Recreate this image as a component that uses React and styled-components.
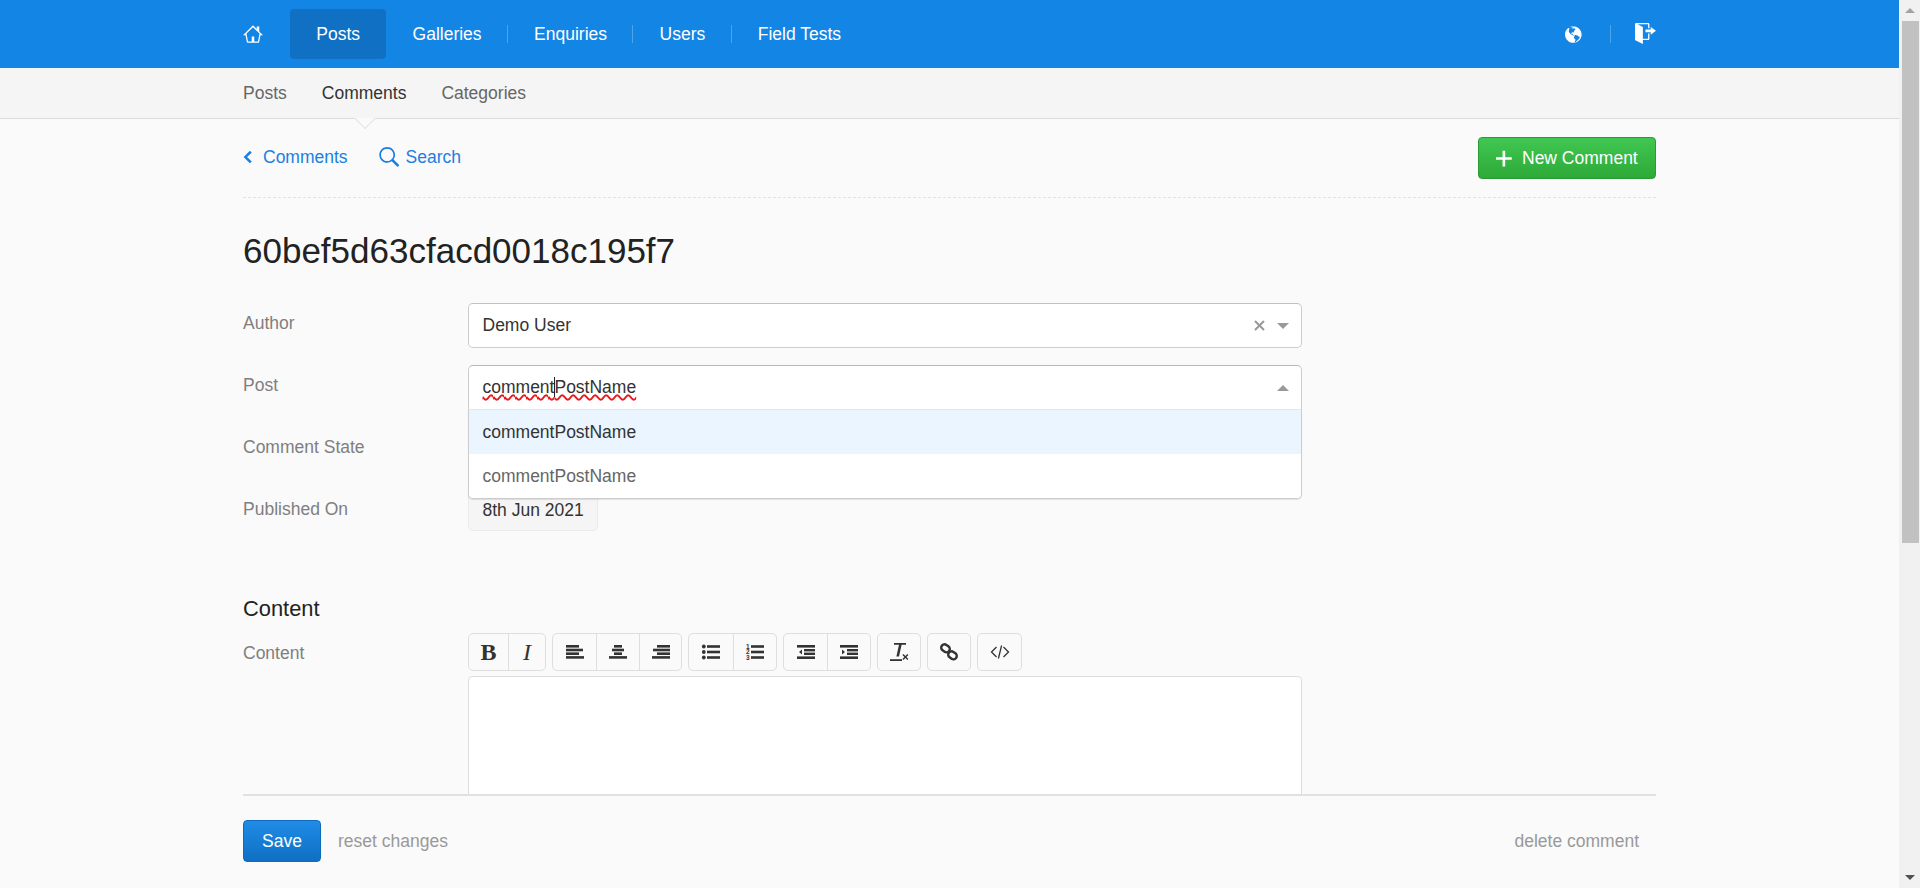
import React from "react";
import styled, { createGlobalStyle } from "styled-components";

const GlobalStyle = createGlobalStyle`
  html, body {
    margin: 0;
    padding: 0;
    height: 100%;
    overflow: hidden;
    background: #fafafa;
  }
  body {
    font-family: "Liberation Sans", Arial, sans-serif;
    font-size: 17.5px;
    color: #1a1a1a;
  }
  * { box-sizing: border-box; }
`;

function Icon({ d, vw = 16, vh = 16, size = 20, color = "currentColor" }) {
  return (
    <svg width={(size * vw) / vh} height={size} viewBox={`0 0 ${vw} ${vh}`} fill={color}>
      <path d={d} />
    </svg>
  );
}

const homePath =
  "M16 9l-3-3V2h-2v2L8 1 0 9h2l1 5c0 .55.45 1 1 1h8c.55 0 1-.45 1-1l1-5h2zm-4 5H9v-4H7v4H4L2.81 7.69 8 2.5l5.19 5.19L12 14z";
const globePath =
  "M7 1C3.14 1 0 4.14 0 8s3.14 7 7 7c.48 0 .94-.05 1.38-.14-.17-.08-.2-.73-.02-1.09.19-.41.81-1.45.2-1.8-.61-.35-.44-.5-.81-.91-.37-.41-.22-.47-.25-.58-.08-.34.36-.89.39-.94.02-.06.02-.27 0-.33 0-.08-.27-.22-.34-.23-.06 0-.11.11-.2.13-.09.02-.5-.25-.59-.33-.09-.08-.14-.23-.27-.34-.13-.13-.14-.03-.33-.11s-.8-.31-1.28-.48c-.48-.19-.52-.47-.52-.66-.02-.2-.3-.47-.42-.67-.14-.2-.16-.47-.2-.41-.04.06.25.78.2.81-.05.02-.16-.2-.3-.38-.14-.19.14-.09-.3-.95s.14-1.3.17-1.75c.03-.45.38.17.19-.13-.19-.3 0-.89-.14-1.11-.13-.22-.88.25-.88.25.02-.22.69-.58 1.16-.92.47-.34.78-.06 1.16.05.39.13.41.09.28-.05-.13-.13.06-.17.36-.13.28.05.38.41.83.36.47-.03.05.09.11.22s-.06.11-.38.3c-.3.2.02.22.55.61s.38-.25.31-.55c-.07-.3.39-.06.39-.06.33.22.27.02.5.08.23.06.91.64.91.64-.83.44-.31.48-.17.59.14.11-.28.3-.28.3-.17-.17-.19.02-.3.08-.11.06-.02.22-.02.22-.56.09-.44.69-.42.83 0 .14-.38.36-.47.58-.09.2.25.64.06.66-.19.03-.34-.66-1.31-.41-.3.08-.94.41-.59 1.08.36.69.92-.19 1.11-.09.19.1-.06.53-.02.55.04.02.53.02.56.61.03.59.77.53.92.55.17 0 .7-.44.77-.45.06-.03.38-.28 1.03.09.66.36.98.31 1.2.47.22.16.08.47.28.58.2.11 1.06-.03 1.28.31.22.34-.88 2.09-1.22 2.28-.34.19-.48.64-.84.92s-.81.64-1.27.91c-.41.23-.47.66-.66.8 3.14-.7 5.48-3.5 5.48-6.84 0-3.86-3.14-7-7-7z";
const signOutPath =
  "M11.992 8.994V6.996H7.995v-2h3.997V2.999l3.998 2.998-3.998 2.998zm-1.998 2.998H5.996V2.998L2 1h7.995v2.998h1V1c0-.55-.45-.999-1-.999H.999A1.001 1.001 0 0 0 0 1v11.372c0 .39.22.73.55.91L5.996 16v-3.008h3.998c.55 0 1-.45 1-1V7.995h-1v3.997z";
const searchPath =
  "M15.7 13.3l-3.81-3.83A5.93 5.93 0 0 0 13 6c0-3.31-2.69-6-6-6S1 2.69 1 6s2.69 6 6 6c1.3 0 2.48-.41 3.47-1.11l3.83 3.81c.19.2.45.3.7.3.25 0 .52-.09.7-.3a.996.996 0 0 0 0-1.41v.01zM7 10.7c-2.59 0-4.7-2.11-4.7-4.7 0-2.59 2.11-4.7 4.7-4.7 2.59 0 4.7 2.11 4.7 4.7 0 2.59-2.11 4.7-4.7 4.7z";
const chevronPath = "M5.5 3L7 4.5 3.25 8 7 11.5 5.5 13l-5-5 5-5z";
const plusPath = "M12 9H7v5H5V9H0V7h5V2h2v5h5v2z";

const Page = styled.div`
  display: flex;
  width: 1920px;
  height: 888px;
  overflow: hidden;
`;
const Main = styled.div`
  flex: 1;
  min-width: 0;
  display: flex;
  flex-direction: column;
  background: #fafafa;
`;
const BarInner = styled.div`
  width: 1413px;
  height: 100%;
  margin: 0 auto;
  display: flex;
  align-items: ${(p) => p.$align || "stretch"};
`;
const Content = styled.div`
  width: 1413px;
  margin: 0 auto;
`;

const TopBar = styled.header`
  flex: none;
  height: 68px;
  background: #1385e5;
  color: #fff;
`;
const NavItem = styled.a`
  height: 50px;
  display: flex;
  align-items: center;
  position: relative;
  padding: 0 26.25px;
  border-radius: 4px;
  background: ${(p) => (p.$active ? "#1071c4" : "transparent")};
  ${(p) =>
    p.$sep &&
    `&::after {
      content: "";
      position: absolute;
      right: 0;
      top: 16px;
      height: 18px;
      width: 1px;
      background: rgba(255, 255, 255, 0.25);
    }`}
`;
const HomeLink = styled.a`
  display: flex;
  align-items: center;
  width: 47px;
  height: 50px;
`;
const NavRight = styled.div`
  margin-left: auto;
  display: flex;
  align-items: center;
`;
const GlobeLink = styled.a`
  display: flex;
  align-items: center;
  height: 18px;
  padding: 0 28px 0 0;
  border-right: 1px solid rgba(255, 255, 255, 0.25);
`;
const SignOutLink = styled.a`
  display: flex;
  margin: -1px 0 0 24px;
`;

const SubBar = styled.nav`
  flex: none;
  height: 51px;
  background: #f5f5f5;
  border-bottom: 1px solid #dcdcdc;
`;
const SubItem = styled.a`
  position: relative;
  display: flex;
  align-items: center;
  height: 50px;
  margin-right: 35px;
  color: ${(p) => (p.$active ? "#333" : "#666")};
  ${(p) =>
    p.$active &&
    `&::after {
      content: "";
      position: absolute;
      left: 50%;
      bottom: -7.5px;
      width: 15px;
      height: 15px;
      margin-left: -7.5px;
      background: #fafafa;
      border-right: 1px solid #dcdcdc;
      border-bottom: 1px solid #dcdcdc;
      clip-path: polygon(100% 0, 100% 100%, 0 100%);
      transform: rotate(45deg);
    }`}
`;

const Body = styled.div`
  flex: 1;
  min-height: 0;
  overflow: hidden;
`;
const ActionRow = styled.div`
  height: 79px;
  display: flex;
  align-items: center;
  padding-bottom: 2px;
  border-bottom: 1px dashed #e1e1e1;
`;
const TextLink = styled.a`
  display: flex;
  align-items: center;
  color: #1a7fe3;
  margin-right: ${(p) => p.$mr || 0}px;
`;
const LinkIcon = styled.span`
  display: flex;
  margin-right: ${(p) => p.$mr}px;
`;
const NewButton = styled.button`
  margin: 2px 0 0 auto;
  width: 178px;
  height: 42px;
  display: flex;
  align-items: center;
  justify-content: center;
  gap: 10px;
  padding: 0;
  color: #fff;
  font: inherit;
  border: 1px solid #2a9a34;
  border-radius: 4px;
  background: linear-gradient(to bottom, #40c752, #2ea938);
`;
const Title = styled.h1`
  margin: 0;
  padding-top: 33px;
  height: 105px;
  font-size: 35px;
  line-height: 40px;
  font-weight: 400;
  color: #222;
`;

const Row = styled.div`
  display: flex;
  margin-bottom: 17px;
`;
const Label = styled.label`
  flex: none;
  width: 225px;
  line-height: 41px;
  color: #7f7f7f;
`;
const Field = styled.div`
  position: relative;
  width: 834px;
`;
const Control = styled.div`
  height: 45px;
  display: flex;
  align-items: center;
  padding: 0 12px 0 13.5px;
  background: #fff;
  border: 1px solid #ccc;
  border-top-color: ${(p) => (p.$open ? "#b8b8b8" : "#c2c2c2")};
  border-radius: ${(p) => (p.$open ? "5px 5px 0 0" : "5px")};
  color: #333;
`;
const SpellText = styled.span`
  text-decoration: underline wavy #e8181b 1.5px;
  text-underline-offset: 1px;
`;
const Caret = styled.span`
  display: inline-block;
  width: 1px;
  height: 20px;
  margin-right: -1px;
  vertical-align: -4px;
  background: #222;
`;
const ClearX = styled.svg`
  margin-left: auto;
  width: 11px;
  height: 11px;
  stroke: #999;
  stroke-width: 2;
`;
const Arrow = styled.span`
  width: 0;
  height: 0;
  margin-left: ${(p) => (p.$only ? "auto" : "12px")};
  border-left: 6.5px solid transparent;
  border-right: 6.5px solid transparent;
  ${(p) => (p.$up ? "border-bottom" : "border-top")}: 6px solid #999;
`;
const Menu = styled.div`
  position: absolute;
  z-index: 2;
  left: 0;
  right: 0;
  top: 44px;
  background: #fff;
  border: 1px solid #ccc;
  border-top-color: #e6e6e6;
  border-radius: 0 0 5px 5px;
  box-shadow: 0 1px 1px rgba(0, 0, 0, 0.1);
  overflow: hidden;
`;
const Option = styled.div`
  height: 44px;
  display: flex;
  align-items: center;
  padding: 0 13.5px;
  background: ${(p) => (p.$focused ? "#ebf5ff" : "#fff")};
  color: ${(p) => (p.$focused ? "#333" : "#666")};
`;
const ReadOnly = styled.div`
  display: inline-flex;
  align-items: center;
  height: 42px;
  padding: 0 13.5px;
  background: #f5f5f5;
  border: 1px solid #ebebeb;
  border-radius: 5px;
  color: #333;
`;
const SectionTitle = styled.h2`
  margin: 0;
  padding-top: 48px;
  height: 85px;
  font-size: 21.875px;
  line-height: 26px;
  font-weight: 400;
  color: #222;
`;
const ToolBar = styled.div`
  display: flex;
  gap: 6px;
  height: 38px;
  margin-bottom: 5px;
`;
const ToolGroup = styled.div`
  display: flex;
  border: 1px solid #dedede;
  border-radius: 5px;
`;
const ToolButton = styled.button`
  width: ${(p) => p.$w}px;
  padding: 0;
  display: flex;
  align-items: center;
  justify-content: center;
  background: none;
  border: 0;
  color: #333;
  font-family: "Liberation Serif", "Times New Roman", serif;
  font-size: 24px;
  & + & {
    border-left: 1px solid #dedede;
  }
`;
const Editor = styled.div`
  height: 300px;
  background: #fff;
  border: 1px solid #dedede;
  border-radius: 4px 4px 0 0;
`;

const Footer = styled.footer`
  flex: none;
  width: 1413px;
  height: 94px;
  margin: 0 auto;
  display: flex;
  align-items: center;
  padding-bottom: 2px;
  border-top: 2px solid #e1e1e1;
  background: #fafafa;
`;
const SaveButton = styled.button`
  width: 78px;
  height: 42px;
  padding: 0;
  color: #fff;
  font: inherit;
  border: 1px solid #0f6cbd;
  border-radius: 4px;
  background: linear-gradient(to bottom, #1f8ce6, #0f6fc3);
`;
const MutedLink = styled.a`
  color: #999;
  margin-left: ${(p) => p.$ml || "0"};
  margin-right: ${(p) => p.$mr || "0"};
`;

const ScrollBar = styled.div`
  flex: none;
  width: 21px;
  display: flex;
  flex-direction: column;
  align-items: center;
  background: #f1f1f1;
`;
const ScrollCap = styled.div`
  height: 21px;
  flex: none;
  display: flex;
  align-items: center;
  justify-content: center;
  width: 100%;
`;
const ScrollArrow = styled.span`
  width: 0;
  height: 0;
  border-left: 5px solid transparent;
  border-right: 5px solid transparent;
  ${(p) => (p.$down ? "border-top: 5px solid #505050" : "border-bottom: 5px solid #a3a3a3")};
`;
const ScrollThumb = styled.div`
  width: 17px;
  height: 522px;
  margin-left: 1px;
  background: #c1c1c1;
`;
const ScrollSpace = styled.div`
  flex: 1;
`;

const Glyph = styled.svg`
  width: 20px;
  height: 20px;
  fill: #333;
`;
const ListNumber = styled.text`
  font-family: "Liberation Sans", Arial, sans-serif;
  font-size: 6.5px;
  font-weight: 700;
`;
const OutlineGlyph = styled(Glyph)`
  fill: none;
  stroke: #333;
  stroke-width: ${(p) => p.$weight};
`;

function Bars({ rows }) {
  return (
    <Glyph viewBox="0 0 20 20">
      {rows.map(([x, w], i) => (
        <rect key={i} x={x} y={3 + i * 3.7} width={w} height="2.6" />
      ))}
    </Glyph>
  );
}

function BulletList() {
  return (
    <Glyph viewBox="0 0 20 20">
      {[4.5, 10, 15.5].map((y) => (
        <g key={y}>
          <circle cx="2.8" cy={y} r="1.9" />
          <rect x="6" y={y - 1.3} width="13" height="2.6" />
        </g>
      ))}
    </Glyph>
  );
}

function NumberList() {
  return (
    <Glyph viewBox="0 0 20 20">
      {[4.5, 10, 15.5].map((y, i) => (
        <g key={y}>
          <ListNumber x="1" y={y + 2.4}>
            {i + 1}
          </ListNumber>
          <rect x="6" y={y - 1.3} width="13" height="2.6" />
        </g>
      ))}
    </Glyph>
  );
}

function IndentIcon({ flip }) {
  return (
    <Glyph viewBox="0 0 20 20">
      <rect x="1" y="3" width="18" height="2.6" />
      <rect x="8" y="7" width="11" height="2.4" />
      <rect x="8" y="10.6" width="11" height="2.4" />
      <rect x="1" y="14.4" width="18" height="2.6" />
      <path d={flip ? "M3 10l3-2.6v5.2z" : "M6 10L3 7.4v5.2z"} />
    </Glyph>
  );
}

function ClearIcon() {
  return (
    <Glyph viewBox="0 0 20 20">
      <path d="M5 1h12v1.8h-4.4L10 14.4H7.4L10 2.8H5z" />
      <rect x="1" y="17.2" width="12" height="1.8" />
      <path d="M13.4 13l1.1-1 1.9 1.9 1.9-1.9 1.1 1-2 2 2 2-1.1 1.1-1.9-2-1.9 2-1.1-1.1 2-2z" />
    </Glyph>
  );
}

function ChainIcon() {
  return (
    <OutlineGlyph viewBox="0 0 20 20" $weight={2.4}>
      <rect x="2" y="3" width="9" height="6.6" rx="3.3" transform="rotate(35 6.5 6.3)" />
      <rect x="9" y="10" width="9" height="6.6" rx="3.3" transform="rotate(35 13.5 13.3)" />
    </OutlineGlyph>
  );
}

function CodeIcon() {
  return (
    <OutlineGlyph viewBox="0 0 20 20" $weight={1.3}>
      <path d="M6.5 5l-5 5 5 5M13.5 5l5 5-5 5M11.6 3.5L8.4 16.5" />
    </OutlineGlyph>
  );
}

const navItems = [
  { label: "Posts", active: true },
  { label: "Galleries", sep: true },
  { label: "Enquiries", sep: true },
  { label: "Users", sep: true },
  { label: "Field Tests" },
];

export default function App() {
  return (
    <>
      <GlobalStyle />
      <Page>
        <Main>
          <TopBar>
            <BarInner $align="center">
              <HomeLink>
                <Icon d={homePath} size={20} />
              </HomeLink>
              {navItems.map((item) => (
                <NavItem key={item.label} $active={item.active} $sep={item.sep}>
                  {item.label}
                </NavItem>
              ))}
              <NavRight>
                <GlobeLink>
                  <Icon d={globePath} vw={14} size={19} />
                </GlobeLink>
                <SignOutLink>
                  <Icon d={signOutPath} size={21} />
                </SignOutLink>
              </NavRight>
            </BarInner>
          </TopBar>
          <SubBar>
            <BarInner>
              <SubItem>Posts</SubItem>
              <SubItem $active>Comments</SubItem>
              <SubItem>Categories</SubItem>
            </BarInner>
          </SubBar>
          <Body>
            <Content>
              <ActionRow>
                <TextLink $mr={30}>
                  <LinkIcon $mr={10}>
                    <Icon d={chevronPath} vw={8} size={20} />
                  </LinkIcon>
                  Comments
                </TextLink>
                <TextLink>
                  <LinkIcon $mr={7}>
                    <Icon d={searchPath} size={21} />
                  </LinkIcon>
                  Search
                </TextLink>
                <NewButton>
                  <Icon d={plusPath} vw={12} size={21} />
                  New Comment
                </NewButton>
              </ActionRow>
              <Title>60bef5d63cfacd0018c195f7</Title>
              <Row>
                <Label>Author</Label>
                <Field>
                  <Control>
                    Demo User
                    <ClearX viewBox="0 0 11 11">
                      <path d="M1 1l9 9M10 1l-9 9" />
                    </ClearX>
                    <Arrow />
                  </Control>
                </Field>
              </Row>
              <Row>
                <Label>Post</Label>
                <Field>
                  <Control $open>
                    <SpellText>
                      comment
                      <Caret />
                      PostName
                    </SpellText>
                    <Arrow $up $only />
                  </Control>
                  <Menu>
                    <Option $focused>commentPostName</Option>
                    <Option>commentPostName</Option>
                  </Menu>
                </Field>
              </Row>
              <Row>
                <Label>Comment State</Label>
                <Field>
                  <Control>
                    Published
                    <Arrow $only />
                  </Control>
                </Field>
              </Row>
              <Row>
                <Label>Published On</Label>
                <Field>
                  <ReadOnly>8th Jun 2021</ReadOnly>
                </Field>
              </Row>
              <SectionTitle>Content</SectionTitle>
              <Row>
                <Label>Content</Label>
                <Field>
                  <ToolBar>
                    <ToolGroup>
                      <ToolButton $w={39}>
                        <b>B</b>
                      </ToolButton>
                      <ToolButton $w={37}>
                        <i>I</i>
                      </ToolButton>
                    </ToolGroup>
                    <ToolGroup>
                      <ToolButton $w={43}>
                        <Bars rows={[[1, 13], [1, 17], [1, 13], [1, 18]]} />
                      </ToolButton>
                      <ToolButton $w={43}>
                        <Bars rows={[[6, 8], [4, 12], [6, 8], [1, 18]]} />
                      </ToolButton>
                      <ToolButton $w={42}>
                        <Bars rows={[[6, 13], [2, 17], [6, 13], [1, 18]]} />
                      </ToolButton>
                    </ToolGroup>
                    <ToolGroup>
                      <ToolButton $w={44}>
                        <BulletList />
                      </ToolButton>
                      <ToolButton $w={43}>
                        <NumberList />
                      </ToolButton>
                    </ToolGroup>
                    <ToolGroup>
                      <ToolButton $w={43}>
                        <IndentIcon flip />
                      </ToolButton>
                      <ToolButton $w={43}>
                        <IndentIcon />
                      </ToolButton>
                    </ToolGroup>
                    <ToolGroup>
                      <ToolButton $w={42}>
                        <ClearIcon />
                      </ToolButton>
                    </ToolGroup>
                    <ToolGroup>
                      <ToolButton $w={42}>
                        <ChainIcon />
                      </ToolButton>
                    </ToolGroup>
                    <ToolGroup>
                      <ToolButton $w={43}>
                        <CodeIcon />
                      </ToolButton>
                    </ToolGroup>
                  </ToolBar>
                  <Editor />
                </Field>
              </Row>
            </Content>
          </Body>
          <Footer>
            <SaveButton>Save</SaveButton>
            <MutedLink $ml="17px">reset changes</MutedLink>
            <MutedLink $ml="auto" $mr="17px">
              delete comment
            </MutedLink>
          </Footer>
        </Main>
        <ScrollBar>
          <ScrollCap>
            <ScrollArrow />
          </ScrollCap>
          <ScrollThumb />
          <ScrollSpace />
          <ScrollCap>
            <ScrollArrow $down />
          </ScrollCap>
        </ScrollBar>
      </Page>
    </>
  );
}
